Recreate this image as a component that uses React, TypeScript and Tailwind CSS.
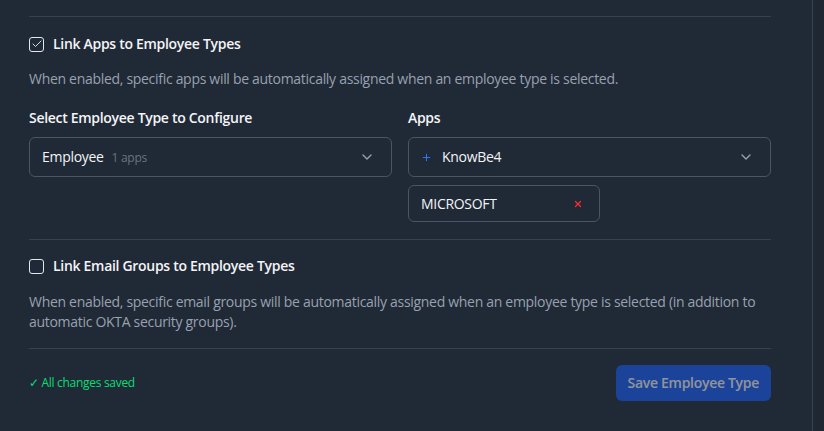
import { ChevronDown, Plus, X, Check } from "lucide-react";

function Checkbox({ checked }: { checked: boolean }) {
  return (
    <span className="flex h-[15px] w-[15px] items-center justify-center rounded-[3px] border border-gray-200 bg-[#1f2937]">
      {checked && <Check size={12} strokeWidth={1.75} className="text-gray-100" />}
    </span>
  );
}

export default function App() {
  return (
    <div
      className="flex h-[431px] w-[824px] bg-[#202936] tracking-[-0.3px] text-gray-100"
      style={{ fontFamily: '"Open Sans", sans-serif' }}
    >
      <div className="flex-1 pl-[29px] pr-[41px] pt-4">
        <div className="border-t border-[#374151]" />

        <label className="mt-[17px] flex h-5 items-center gap-[9px]">
          <Checkbox checked />
          <span className="text-sm font-semibold">Link Apps to Employee Types</span>
        </label>
        <p className="mt-[15px] text-sm leading-5 text-gray-400">
          When enabled, specific apps will be automatically assigned when an employee type is selected.
        </p>

        <div className="mt-[19px] grid grid-cols-2 gap-4">
          <div>
            <div className="text-sm font-semibold leading-5">Select Employee Type to Configure</div>
            <button className="mt-[9px] flex h-10 w-full items-center justify-between rounded-md border border-gray-600 pl-3 pr-4">
              <span className="flex items-baseline gap-2">
                <span className="text-sm">Employee</span>
                <span className="text-xs text-gray-500">1 apps</span>
              </span>
              <ChevronDown size={16} className="text-gray-400" />
            </button>
          </div>
          <div>
            <div className="text-sm font-semibold leading-5">Apps</div>
            <button className="mt-[9px] flex h-10 w-full items-center justify-between rounded-md border border-gray-600 pl-3 pr-4">
              <span className="flex items-center gap-[10px]">
                <Plus size={11} className="text-blue-500" />
                <span className="text-sm">KnowBe4</span>
              </span>
              <ChevronDown size={16} className="text-gray-400" />
            </button>
            <div className="mt-2 flex h-[37px] w-[192px] items-center justify-between rounded-md border border-gray-600 pl-3 pr-4">
              <span className="text-sm">MICROSOFT</span>
              <X size={10} strokeWidth={3} className="text-red-500" />
            </div>
          </div>
        </div>

        <div className="mt-[17px] border-t border-[#374151]" />

        <label className="mt-4 flex h-5 items-center gap-[9px]">
          <Checkbox checked={false} />
          <span className="text-sm font-semibold">Link Email Groups to Employee Types</span>
        </label>
        <p className="mt-4 text-sm leading-5 text-gray-400">
          When enabled, specific email groups will be automatically assigned when an employee type is selected (in addition to automatic OKTA security groups).
        </p>

        <div className="mt-4 border-t border-[#374151]" />

        <div className="mt-4 flex items-center justify-between">
          <span className="text-xs text-green-400">✓ All changes saved</span>
          <button className="h-9 rounded-md bg-blue-600 px-3 text-sm font-semibold text-white opacity-50">
            Save Employee Type
          </button>
        </div>
      </div>
      <div className="w-3 border-l border-[#374151] bg-[#1f2733]" />
    </div>
  );
}
